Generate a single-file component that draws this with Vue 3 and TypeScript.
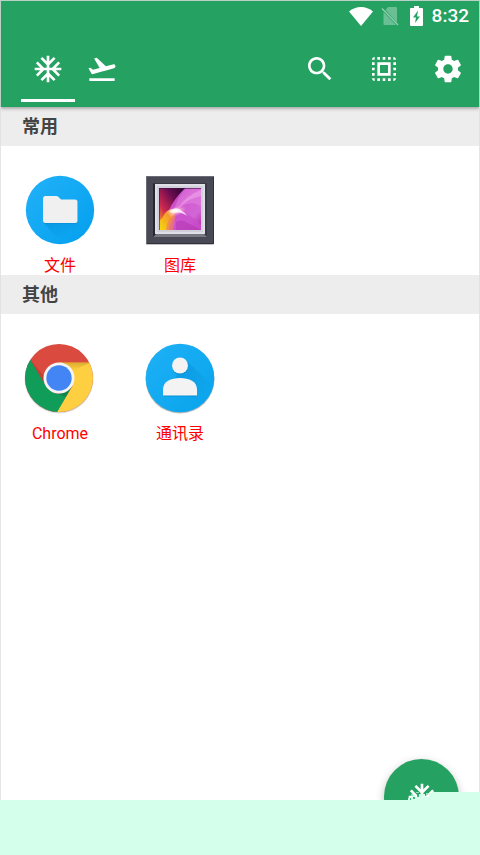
<script setup lang="ts">
interface AppEntry {
  name: string
  icon: 'files' | 'gallery' | 'chrome' | 'contacts'
}
interface AppSection {
  title: string
  apps: AppEntry[]
}

const freezePath =
  'M22 11h-4.17l3.24-3.24-1.41-1.42L15 11h-2V9l4.66-4.66-1.42-1.41L13 6.17V2h-2v4.17L7.76 2.93 6.34 4.34 11 9v2H9L4.34 6.34 2.93 7.76 6.17 11H2v2h4.17l-3.24 3.24 1.41 1.42L9 13h2v2l-4.66 4.66 1.42 1.41L11 17.83V22h2v-4.17l3.24 3.24 1.42-1.41L13 15v-2h2l4.66 4.66 1.41-1.42L17.83 13H22z'

const tabs = [
  { label: '冻结', active: true, path: freezePath },
  {
    label: '启动',
    active: false,
    path: 'M2.5 19h19v2h-19zm19.57-9.36c-.21-.8-1.04-1.28-1.84-1.06L14.92 10l-6.9-6.43-1.93.51 4.14 7.17-4.97 1.33-1.97-1.54-1.45.39 1.82 3.16.77 1.33 1.6-.43 5.31-1.42 4.35-1.16L21 11.49c.81-.23 1.28-1.05 1.07-1.85z',
  },
]

const actions = [
  {
    label: '搜索',
    path: 'M15.5 14h-.79l-.28-.27C15.41 12.59 16 11.11 16 9.5 16 5.91 13.09 3 9.5 3S3 5.91 3 9.5 5.91 16 9.5 16c1.61 0 3.09-.59 4.23-1.57l.27.28v.79l5 4.99L20.49 19l-4.99-5zm-6 0C7.01 14 5 11.99 5 9.5S7.01 5 9.5 5 14 7.01 14 9.5 11.99 14 9.5 14z',
  },
  {
    label: '全选',
    path: 'M3 5h2V3c-1.1 0-2 .9-2 2zm0 8h2v-2H3v2zm4 8h2v-2H7v2zM3 9h2V7H3v2zm10-6h-2v2h2V3zm6 0v2h2c0-1.1-.9-2-2-2zM5 21v-2H3c0 1.1.9 2 2 2zm-2-4h2v-2H3v2zM9 3H7v2h2V3zm2 18h2v-2h-2v2zm8-8h2v-2h-2v2zm0 8c1.1 0 2-.9 2-2h-2v2zm0-12h2V7h-2v2zm0 8h2v-2h-2v2zm-4 4h2v-2h-2v2zm0-16h2V3h-2v2zM7 17h10V7H7v10zm2-8h6v6H9V9z',
  },
  {
    label: '设置',
    path: 'M19.43 12.98c.04-.32.07-.64.07-.98s-.03-.66-.07-.98l2.11-1.65c.19-.15.24-.42.12-.64l-2-3.46c-.12-.22-.39-.3-.61-.22l-2.49 1c-.52-.4-1.08-.73-1.69-.98l-.38-2.65C14.46 2.18 14.25 2 14 2h-4c-.25 0-.46.18-.49.42l-.38 2.65c-.61.25-1.17.59-1.69.98l-2.49-1c-.23-.09-.49 0-.61.22l-2 3.46c-.13.22-.07.49.12.64l2.11 1.65c-.04.32-.07.65-.07.98s.03.66.07.98l-2.11 1.65c-.19.15-.24.42-.12.64l2 3.46c.12.22.39.3.61.22l2.49-1c.52.4 1.08.73 1.69.98l.38 2.65c.03.24.24.42.49.42h4c.25 0 .46-.18.49-.42l.38-2.65c.61-.25 1.17-.59 1.69-.98l2.49 1c.23.09.49 0 .61-.22l2-3.46c.12-.22.07-.49-.12-.64l-2.11-1.65zM12 15.5c-1.93 0-3.5-1.57-3.5-3.5s1.57-3.5 3.5-3.5 3.5 1.57 3.5 3.5-1.57 3.5-3.5 3.5z',
  },
]

const sections: AppSection[] = [
  { title: '常用', apps: [{ name: '文件', icon: 'files' }, { name: '图库', icon: 'gallery' }] },
  { title: '其他', apps: [{ name: 'Chrome', icon: 'chrome' }, { name: '通讯录', icon: 'contacts' }] },
]
</script>

<template>
  <div class="page">
    <div class="screen">
      <header class="app-bar">
        <div class="status">
          <svg class="wifi" viewBox="0 0 24 19" aria-hidden="true">
            <path d="M12 19 0 4.500C3.500 1.500 7.500 0 12 0s8.500 1.500 12 4.500z" fill="#fff" />
          </svg>
          <svg class="sim" viewBox="0 0 18 20" aria-hidden="true">
            <path d="M7 1h8q1 0 1 1v14.500L4.500 4zM2.500 6v12q0 1 1 1H15z" fill="#fff" opacity=".32" />
            <path d="M1 2.500 17 19" stroke="#fff" stroke-width="1.300" opacity=".5" />
          </svg>
          <svg class="battery" viewBox="0 0 13 20" aria-hidden="true">
            <path d="M4 0h5v2h3q1 0 1 1v16q0 1-1 1H1q-1 0-1-1V3q0-1 1-1h3z" fill="#fff" />
            <path d="M8 4.500 3 11.500h3L5 17l5-6.500H7z" fill="#25a162" />
          </svg>
          <span class="clock">8:32</span>
        </div>
        <div class="toolbar">
          <nav class="tabs">
            <button
              v-for="tab in tabs"
              :key="tab.label"
              type="button"
              class="tab"
              :class="{ active: tab.active }"
              :aria-label="tab.label"
            >
              <svg class="glyph" viewBox="0 0 24 24"><path :d="tab.path" /></svg>
            </button>
          </nav>
          <div class="actions">
            <button
              v-for="action in actions"
              :key="action.label"
              type="button"
              class="action"
              :aria-label="action.label"
            >
              <svg class="glyph" viewBox="0 0 24 24"><path :d="action.path" /></svg>
            </button>
          </div>
        </div>
      </header>

      <main class="content">
        <section v-for="section in sections" :key="section.title">
          <h2 class="section-title">{{ section.title }}</h2>
          <div class="grid">
            <button v-for="app in section.apps" :key="app.name" type="button" class="app">
              <svg v-if="app.icon === 'files'" class="app-icon" viewBox="0 0 72 72" aria-hidden="true">
                <defs>
                  <linearGradient id="filesBg" x1="0" y1="0" x2="1" y2="1">
                    <stop offset="0" stop-color="#22b2f8" />
                    <stop offset="1" stop-color="#039fee" />
                  </linearGradient>
                  <linearGradient id="filesShade" x1="0" y1="0" x2="1" y2="1">
                    <stop offset=".1" stop-color="#0288d1" stop-opacity=".4" />
                    <stop offset=".6" stop-color="#0288d1" stop-opacity="0" />
                  </linearGradient>
                </defs>
                <circle cx="36" cy="36" r="34.200" fill="url(#filesBg)" />
                <path d="M20 49 52 48 62 58Q52 70 38 70z" fill="url(#filesShade)" />
                <path d="M21 23h11q1.500 0 2.500 1l2.500 2.500h14q2.500 0 2.500 2.500v18q0 2.500-2.500 2.500H21.500Q19 49.500 19 47V25.500Q19 23 21 23z" fill="#0278bd" opacity=".5" />
                <path d="M21.500 22H32q1.500 0 2.500 1l2.500 2.500h14q2.500 0 2.500 2.500v18.500q0 2.500-2.500 2.500H21.500Q19 49 19 46.500v-22Q19 22 21.500 22z" fill="#f0f0f0" />
              </svg>

              <svg v-else-if="app.icon === 'gallery'" class="app-icon" viewBox="0 0 72 72" aria-hidden="true">
                <defs>
                  <linearGradient id="photo" x1="0" y1="0" x2="1" y2="1">
                    <stop offset="0" stop-color="#a02aa5" />
                    <stop offset=".45" stop-color="#d357d0" />
                    <stop offset=".75" stop-color="#d267d6" />
                    <stop offset="1" stop-color="#ae249f" />
                  </linearGradient>
                  <linearGradient id="dusk" x1="1" y1="0" x2="0" y2="1">
                    <stop offset="0" stop-color="#22042c" />
                    <stop offset=".35" stop-color="#690c50" />
                    <stop offset=".7" stop-color="#cf2950" />
                    <stop offset="1" stop-color="#f6aa19" />
                  </linearGradient>
                  <radialGradient id="glow">
                    <stop offset="0" stop-color="#fff" stop-opacity=".9" />
                    <stop offset=".4" stop-color="#ffd8dd" stop-opacity=".5" />
                    <stop offset="1" stop-color="#ff9fd5" stop-opacity="0" />
                  </radialGradient>
                  <linearGradient id="flame" x1="0" y1="1" x2="1" y2="0">
                    <stop offset="0" stop-color="#f5dc09" />
                    <stop offset=".6" stop-color="#f69a2c" />
                    <stop offset="1" stop-color="#ffe5e0" />
                  </linearGradient>
                </defs>
                <rect x="2" y="3" width="68" height="68" rx="1" fill="#999" opacity=".6" />
                <rect x="2" y="2" width="68" height="68" rx="1" fill="#484955" />
                <path d="M2.500 69V2.500h67" fill="none" stroke="#6b6c78" />
                <path d="M3 69.500h66.500V3" fill="none" stroke="#30313b" />
                <path d="M9 9h54v54H9z" fill="#393a45" />
                <path d="M9 63h54l-3-3H12z" fill="#777884" />
                <path d="M9 9v54l3-3V12z" fill="#25262f" />
                <path d="M11 10h50v50H11z" fill="#dfdfe7" />
                <path d="M13 12h46v46H13z" fill="#d0cfda" />
                <path d="M15 14h42v42H15z" fill="url(#photo)" />
                <path d="M15 14h26Q30 25 25 36T15 51z" fill="url(#dusk)" />
                <path d="M42 14h15v19Q48 24 30 37 33 23 42 14z" fill="#ed9ae9" opacity=".35" />
                <path d="M57 16v6Q44 24 33 36 42 21 57 16z" fill="#f3b5ef" opacity=".45" />
                <path d="M15 56V47q4-3 6-8 5-5 12-4-5 8-8 21z" fill="url(#flame)" />
                <path d="M25 56q2-14 12-18 13 4 20 13v5z" fill="#ca4fcd" opacity=".8" />
                <path d="M22 56q1-12 10-17l-3 17z" fill="#f07f62" opacity=".75" />
                <path d="M32 56v-8q6-3 10 0l15 8z" fill="#ad2ea6" opacity=".4" />
                <ellipse cx="33" cy="37" rx="10" ry="5" transform="rotate(-20 33 37)" fill="url(#glow)" />
                <path d="M25 38q7-7 13-1 4 2 5 5-6-5-13-3z" fill="#fff" opacity=".75" />
                <path d="M15.500 56V14.500H57" fill="none" stroke="#3a1446" opacity=".6" />
              </svg>

              <svg v-else-if="app.icon === 'chrome'" class="app-icon" viewBox="0 0 72 72" aria-hidden="true">
                <defs>
                  <clipPath id="disc"><circle cx="35" cy="36" r="34" /></clipPath>
                  <radialGradient id="discShadow">
                    <stop offset=".92" stop-color="#000" stop-opacity=".3" />
                    <stop offset="1" stop-color="#000" stop-opacity="0" />
                  </radialGradient>
                  <linearGradient id="redEdge" x1="0" y1="0" x2="0" y2="1">
                    <stop offset="0" stop-color="#a87a15" stop-opacity=".4" />
                    <stop offset="1" stop-color="#a87a15" stop-opacity="0" />
                  </linearGradient>
                </defs>
                <circle cx="35" cy="37" r="35" fill="url(#discShadow)" />
                <g clip-path="url(#disc)">
                  <path d="M0 0h72v72H0z" fill="#db4a3e" />
                  <path d="M0 10 6.500 18 21.500 43.500Q27 52 36 52l12-8-15 28H0z" fill="#109d59" />
                  <path d="M35 20.500h37V72H32l16.500-28z" fill="#ffcf42" />
                  <path d="M35 20.500h32l-18 8z" fill="url(#redEdge)" />
                  <path d="m6.500 18 15 25.500-2-10z" fill="#7c241c" opacity=".25" />
                  <path d="m48.500 44-14 8 7 3z" fill="#075c32" opacity=".35" />
                </g>
                <circle cx="35" cy="36" r="15.500" fill="#f5f5f5" />
                <circle cx="35" cy="36" r="12.700" fill="#4385f5" />
              </svg>

              <svg v-else class="app-icon" viewBox="0 0 72 72" aria-hidden="true">
                <defs>
                  <linearGradient id="contactsBg" x1="0" y1="0" x2="1" y2="1">
                    <stop offset="0" stop-color="#1eb0f6" />
                    <stop offset="1" stop-color="#08a4ec" />
                  </linearGradient>
                  <linearGradient id="personShade" x1="0" y1="0" x2="1" y2="1">
                    <stop offset=".1" stop-color="#0277bd" stop-opacity=".35" />
                    <stop offset=".8" stop-color="#0277bd" stop-opacity="0" />
                  </linearGradient>
                </defs>
                <circle cx="36" cy="37" r="34.500" fill="#888" opacity=".6" />
                <circle cx="36" cy="36" r="34.300" fill="url(#contactsBg)" />
                <path d="m42 18 26 26q-4 12-14 18L30 38z" fill="url(#personShade)" />
                <circle cx="36" cy="24.500" r="8" fill="#0277bd" opacity=".5" />
                <circle cx="36" cy="23.500" r="8" fill="#f3f3f3" />
                <path d="M19 54.500v-6C19 40 27 37 36 37s17 3 17 11.500v6z" fill="#0277bd" opacity=".5" />
                <path d="M19 53.500v-6C19 39.500 27 36 36 36s17 3.500 17 11.500v6z" fill="#f3f3f3" />
              </svg>
              <span class="app-name">{{ app.name }}</span>
            </button>
          </div>
        </section>
      </main>

      <button type="button" class="fab" aria-label="冻结">
        <svg class="glyph" viewBox="0 0 24 24"><path :d="freezePath" /></svg>
      </button>
      <svg class="patch" viewBox="0 0 72 8" aria-hidden="true">
        <path d="M24 0h48v8H0V6h3V3h4v2h4V2h6v3h4V1h3z" fill="#d4ffea" />
        <path d="M3 2h2v2H3zM8 0h3v1H8zM18 1h2v2h-2z" fill="#8fe3b8" />
        <path d="M5 5h2v2H5zM9 3h2v2H9zM2 6h1v2H2z" fill="#3cb57a" />
      </svg>
    </div>
    <footer class="base"></footer>
  </div>
</template>

<style>
body {
  margin: 0;
}
</style>

<style scoped>
.page {
  display: flex;
  flex-direction: column;
  min-height: 100vh;
  font-family: Roboto, 'Noto Sans CJK SC', sans-serif;
}
.screen {
  position: relative;
  flex: 1;
  overflow: hidden;
  background: #fff;
}
.screen::after {
  content: '';
  position: absolute;
  inset: 0;
  border: 1px solid rgba(222, 222, 222, 0.8);
  border-bottom: 0;
  pointer-events: none;
}
button {
  padding: 0;
  border: 0;
  background: none;
  font: inherit;
  cursor: pointer;
}
.app-bar {
  position: relative;
  background: #25a162;
  box-shadow: 0 1px 4px rgba(0, 0, 0, 0.4);
}
.status {
  display: flex;
  align-items: center;
  justify-content: flex-end;
  height: 32px;
  padding-right: 11px;
}
.wifi {
  width: 24px;
  height: 19px;
  margin-right: 8px;
}
.sim {
  width: 18px;
  height: 20px;
  margin-right: 11px;
}
.battery {
  width: 13px;
  height: 20px;
  margin-right: 9px;
}
.clock {
  color: #fff;
  font-size: 19px;
  font-weight: 500;
  line-height: 32px;
}
.toolbar {
  display: flex;
  justify-content: space-between;
  height: 74px;
  padding: 0 0 1px 21px;
}
.tabs,
.actions {
  display: flex;
}
.tab,
.action {
  display: flex;
  align-items: center;
  justify-content: center;
}
.tab {
  position: relative;
  width: 54px;
}
.tab.active::after {
  content: '';
  position: absolute;
  right: 0;
  bottom: 4px;
  left: 0;
  height: 3px;
  background: #fff;
}
.action {
  width: 64px;
}
.glyph {
  display: block;
  width: 32px;
  height: 32px;
  fill: #fff;
}
.section-title {
  margin: 0;
  padding-left: 22px;
  background: #ededed;
  color: #444;
  font-size: 18px;
  font-weight: 700;
  line-height: 39px;
}
.grid {
  display: grid;
  grid-template-columns: repeat(4, 1fr);
  padding-top: 28px;
}
.app {
  display: flex;
  flex-direction: column;
  align-items: center;
  height: 101px;
}
.app-icon {
  flex: none;
  width: 72px;
  height: 72px;
}
.app-name {
  margin-top: 8px;
  color: #f00;
  font-size: 16px;
  line-height: 24px;
}
.fab {
  position: absolute;
  right: 21px;
  bottom: -34px;
  display: flex;
  align-items: center;
  justify-content: center;
  width: 75px;
  height: 75px;
  border-radius: 50%;
  background: #25a162;
  box-shadow: 0 3px 8px rgba(0, 0, 0, 0.25);
}
.patch {
  position: absolute;
  right: 0;
  bottom: 0;
  z-index: 1;
  width: 72px;
  height: 8px;
}
.base {
  height: 55px;
  background: #d4ffea;
}
</style>
